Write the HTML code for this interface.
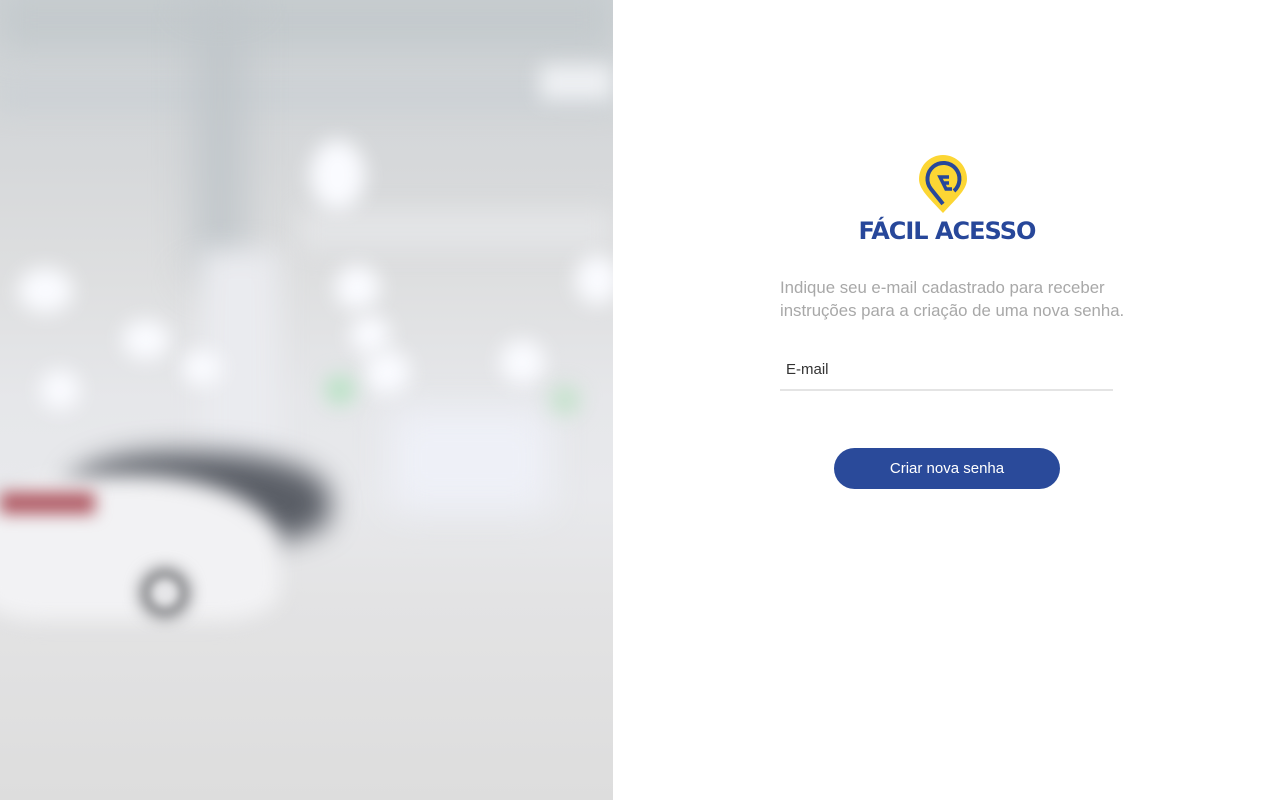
<!DOCTYPE html>
<html><head><meta charset="utf-8"><style>
html,body{margin:0;width:1280px;height:800px;overflow:hidden;background:#fff;font-family:"Liberation Sans",sans-serif}
#left{position:absolute;left:0;top:0;width:613px;height:800px;overflow:hidden;background:linear-gradient(180deg,#cdd2d5 0%,#d6d8da 20%,#dedfe0 35%,#e6e7ea 50%,#e8e9ec 62%,#e3e3e4 75%,#dddddd 100%)}
#left div{position:absolute;filter:blur(10px)}
.b{border-radius:50%;background:#fafbff}
</style></head><body>
<div id="left">
 <div style="left:0;top:80px;width:613px;height:30px;background:#ccd1d5;filter:blur(12px)"></div>
 <div style="left:0;top:-10px;width:613px;height:60px;background:#c4cacd;filter:blur(16px)"></div>
 <div style="left:195px;top:0;width:50px;height:280px;background:#c0c6ca;filter:blur(20px)"></div>
 <div style="left:300px;top:210px;width:313px;height:40px;background:#e3e4e6;filter:blur(12px)"></div>
 <div style="left:200px;top:250px;width:80px;height:230px;background:#eaebef;filter:blur(14px)"></div>
 <div style="left:540px;top:65px;width:73px;height:35px;background:#eef0f3"></div>
 <div class="b" style="left:310px;top:140px;width:55px;height:70px"></div>
 <div class="b" style="left:18px;top:268px;width:55px;height:45px"></div>
 <div class="b" style="left:122px;top:320px;width:48px;height:40px"></div>
 <div class="b" style="left:182px;top:350px;width:40px;height:36px"></div>
 <div class="b" style="left:335px;top:265px;width:45px;height:45px"></div>
 <div class="b" style="left:350px;top:315px;width:40px;height:40px"></div>
 <div class="b" style="left:365px;top:350px;width:45px;height:45px"></div>
 <div class="b" style="left:575px;top:255px;width:45px;height:50px"></div>
 <div class="b" style="left:500px;top:340px;width:45px;height:45px"></div>
 <div class="b" style="left:40px;top:370px;width:40px;height:40px"></div>
 <div style="left:390px;top:410px;width:160px;height:100px;background:#eef0f7;filter:blur(18px)"></div>
 <div class="b" style="left:325px;top:375px;width:30px;height:30px;background:#b8e2c4"></div>
 <div class="b" style="left:550px;top:385px;width:30px;height:30px;background:#c4e2cb"></div>
 <div style="left:70px;top:452px;width:260px;height:90px;border-radius:40% 50% 30% 30%;background:#5a5e66;filter:blur(14px)"></div>
 <div style="left:-20px;top:475px;width:300px;height:145px;border-radius:40% 50% 20% 20%;background:#f2f2f4;filter:blur(10px)"></div>
 <div style="left:0;top:492px;width:95px;height:22px;background:#b05a64;filter:blur(8px)"></div>
 <div class="b" style="left:140px;top:568px;width:50px;height:50px;background:#7c7d80;filter:blur(8px)"></div>
 <div class="b" style="left:150px;top:578px;width:30px;height:30px;background:#e6e6e8;filter:blur(5px)"></div>
</div>
<svg style="position:absolute;left:918px;top:155px" width="52" height="60" viewBox="0 0 52 60">
 <path d="M25 58 C10 42 1 34 1 24 A24 24 0 0 1 49 24 C49 34 40 42 25 58Z" fill="#fcd634"/>
 <path d="M25 49 L13 34 A16 16 0 1 1 36 36" fill="none" stroke="#27479a" stroke-width="4"/>
 <path d="M34 34 L28 34 L22 22 L31 22 M25 28 L31 28" fill="none" stroke="#27479a" stroke-width="3.5"/>
</svg>
<div style="position:absolute;left:843px;top:216px;width:208px;text-align:center;white-space:nowrap;font:bold 24px 'DejaVu Sans',sans-serif;color:#27479a;letter-spacing:-1px;line-height:30px">FÁCIL ACESSO</div>
<div style="position:absolute;left:780px;top:276px;width:380px;font-size:16.8px;line-height:23px;color:#a8a8a8">Indique seu e-mail cadastrado para receber instruções para a criação de uma nova senha.</div>
<div style="position:absolute;left:786px;top:361px;font-size:15px;color:#333">E-mail</div>
<div style="position:absolute;left:780px;top:389px;width:333px;height:2px;background:#e4e4e4"></div>
<div style="position:absolute;left:834px;top:448px;width:226px;height:41px;border-radius:21px;background:#2a4a9a;color:#fff;font-size:15px;line-height:41px;text-align:center">Criar nova senha</div>
</body></html>
